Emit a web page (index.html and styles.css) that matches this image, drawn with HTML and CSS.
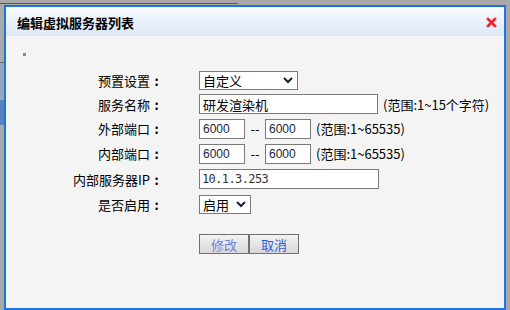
FILE: index.html
```html
<!DOCTYPE html>
<html lang="zh-CN">
<head>
    <meta charset="UTF-8">
    <title>编辑虚拟服务器列表</title>
    <link rel="stylesheet" href="styles.css">
</head>
<body>
    <div class="dialog">
        <div class="titlebar">
            <span class="title">编辑虚拟服务器列表</span>
            <a class="close" href="#" title="关闭">
                <svg width="11" height="11" viewBox="0 0 11 11">
                    <path d="M2 2 L9 9 M9 2 L2 9" stroke="#f7a9ae" stroke-width="3.8" stroke-linecap="round"/>
                    <path d="M2 2 L9 9 M9 2 L2 9" stroke="#e3202d" stroke-width="2.4" stroke-linecap="round"/>
                </svg>
            </a>
        </div>

        <div class="content">
            <i class="mark"></i>

            <form class="form" onsubmit="return false">
                <label class="lbl">预置设置<span class="colon">:</span></label>
                <div class="field">
                    <span class="select wide">自定义
                        <svg width="10" height="7" viewBox="0 0 10 7"><path d="M1 1 L5 5 L9 1" fill="none" stroke="#13213f" stroke-width="2"/></svg>
                    </span>
                </div>

                <label class="lbl">服务名称<span class="colon">:</span></label>
                <div class="field">
                    <input class="txt long" type="text" value="研发渲染机">
                    <span class="hint">(范围:1~15个字符)</span>
                </div>

                <label class="lbl">外部端口<span class="colon">:</span></label>
                <div class="field">
                    <input class="txt port" type="text" value="6000">
                    <span class="dash">--</span>
                    <input class="txt port" type="text" value="6000">
                    <span class="hint">(范围:1~65535)</span>
                </div>

                <label class="lbl">内部端口<span class="colon">:</span></label>
                <div class="field">
                    <input class="txt port" type="text" value="6000">
                    <span class="dash">--</span>
                    <input class="txt port" type="text" value="6000">
                    <span class="hint">(范围:1~65535)</span>
                </div>

                <label class="lbl">内部服务器IP<span class="colon">:</span></label>
                <div class="field">
                    <input class="txt long ip" type="text" value="10.1.3.253">
                </div>

                <label class="lbl">是否启用<span class="colon">:</span></label>
                <div class="field">
                    <span class="select narrow">启用
                        <svg width="10" height="7" viewBox="0 0 10 7"><path d="M1 1 L5 5 L9 1" fill="none" stroke="#13213f" stroke-width="2"/></svg>
                    </span>
                </div>
            </form>

            <div class="actions">
                <button class="btn btn-edit">修改</button><button class="btn">取消</button>
            </div>
        </div>
    </div>
</body>
</html>
```

FILE: styles.css
```css
body {
    margin: 0;
    padding: 5px 4px 0 4px;
    height: 310px;
    box-sizing: border-box;
    overflow: hidden;
    font-family: "Noto Sans CJK SC", sans-serif;
    font-size: 13px;
    color: #000;
    background:
        linear-gradient(#5a5a5a, #5a5a5a) 0 3px / 238px 1px no-repeat,
        linear-gradient(#6a6a6a, #6a6a6a) 0 62px / 4px 1px no-repeat,
        linear-gradient(#97a6ba, #97a6ba) 0 63px / 4px 37px no-repeat,
        linear-gradient(#5b81bb, #5b81bb) 0 100px / 4px 25px no-repeat,
        #a9a9a9;
}

.dialog {
    height: 305px;
    box-sizing: border-box;
    border: 2px solid #1c74e4;
    background-color: #f4f4f4;
}

.titlebar {
    height: 29px;
    display: flex;
    align-items: center;
    justify-content: space-between;
    padding: 0 7px 0 11px;
    background: linear-gradient(#f9fbff, #dce8f7);
}

.title {
    font-weight: bold;
    font-size: 13px;
    padding-top: 1px;
}

.close {
    display: flex;
    margin-top: 2px;
}

.content {
    padding-top: 17px;
}

.mark {
    display: block;
    width: 3px;
    height: 3px;
    margin-left: 17px;
    background-color: #8a8a8a;
}

.form {
    display: grid;
    grid-template-columns: 157px 1fr;
    grid-template-rows: 23px 24px 25px 25px 26px 24px;
    column-gap: 36px;
    align-items: center;
    margin: 13px 0 0 0;
}

.lbl {
    text-align: right;
    white-space: nowrap;
}

.colon {
    display: inline-block;
    width: 13px;
    text-align: center;
    font-weight: bold;
}

.field {
    display: flex;
    align-items: center;
    gap: 5px;
}

.txt {
    box-sizing: border-box;
    height: 20px;
    margin: 0;
    padding: 0 3px;
    border: 1px solid #7a7a7a;
    border-radius: 0;
    background-color: #fff;
    font-family: "Noto Sans CJK SC", sans-serif;
    font-size: 13px;
    color: #000;
    outline: none;
}

.long {
    width: 179px;
}

.port {
    width: 46px;
    font-family: "Liberation Sans", Arial, sans-serif;
    font-size: 12px;
    color: #1b2440;
}

.ip {
    width: 180px;
    padding-left: 2px;
    font-family: "DejaVu Sans Mono", monospace;
    font-size: 12px;
    letter-spacing: -0.6px;
    color: #333;
}

.dash {
    width: 10px;
    text-align: center;
}

.hint {
    white-space: nowrap;
}

.select {
    box-sizing: border-box;
    height: 19px;
    display: flex;
    align-items: center;
    justify-content: space-between;
    padding: 0 4px 0 3px;
    border: 1px solid #7a7a7a;
    background-color: #fff;
}

.select.wide {
    width: 99px;
}

.select.narrow {
    width: 52px;
    padding-right: 4px;
}

.actions {
    margin-top: 18px;
    padding-left: 193px;
    display: flex;
}

.btn {
    width: 50px;
    height: 20px;
    margin: 0;
    padding: 0;
    border: 1px solid #707070;
    background: linear-gradient(#f3f3f3, #d8d8d8);
    font-family: "Noto Sans CJK SC", sans-serif;
    font-size: 13px;
    color: #2d5fdc;
    cursor: pointer;
}

.btn-edit {
    color: #6f80e4;
}
```
